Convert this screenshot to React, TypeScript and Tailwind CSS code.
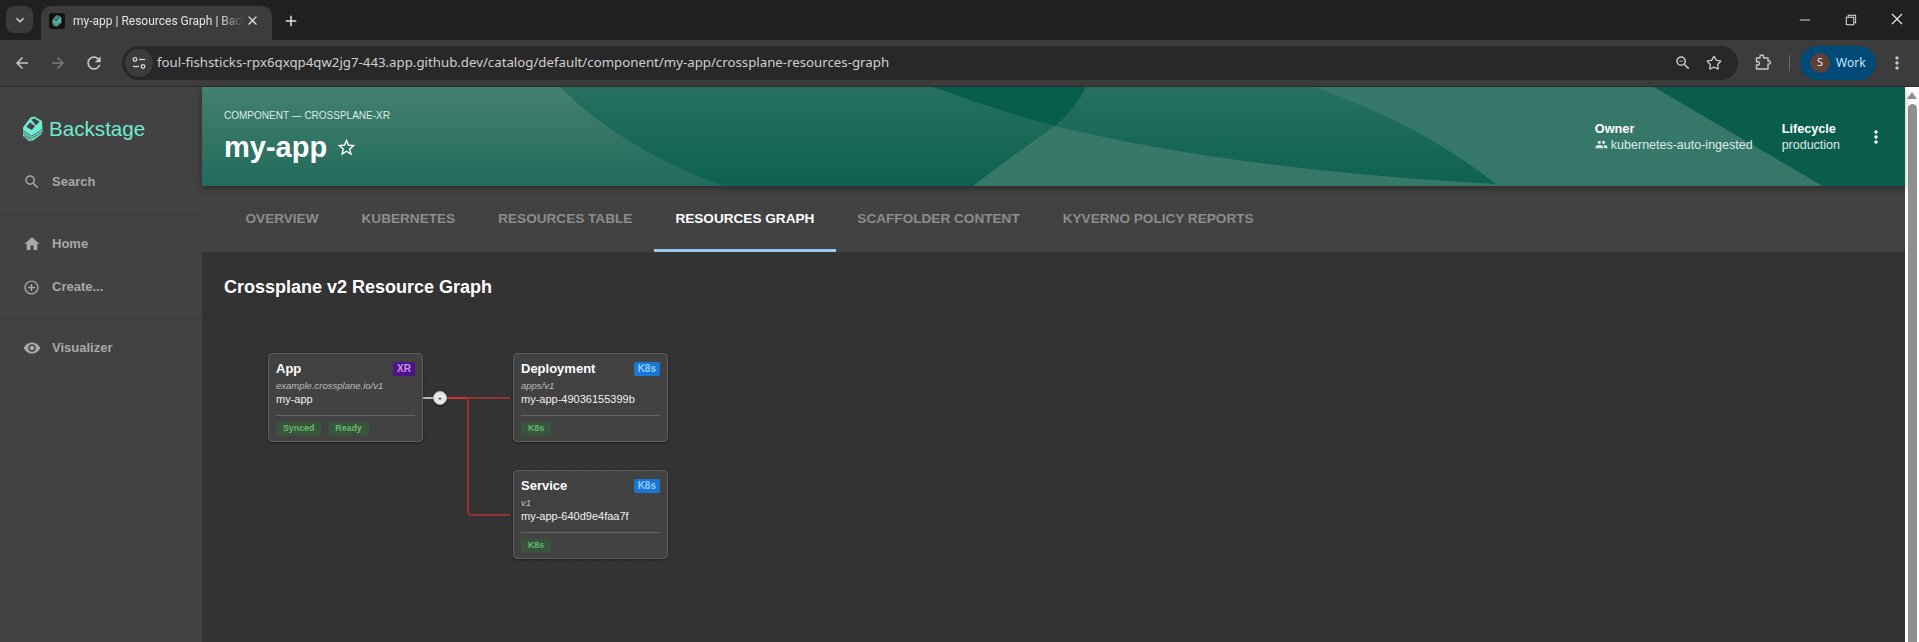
import React from "react";
import { MdArrowBack, MdArrowForward, MdRefresh, MdHome, MdSearch, MdAddCircleOutline, MdVisibility, MdPeople, MdMoreVert, MdStarBorder, MdKeyboardArrowDown, MdClose, MdAdd, MdZoomOut } from "react-icons/md";
import { VscChromeMinimize, VscChromeRestore, VscChromeClose } from "react-icons/vsc";
import { LuStar } from "react-icons/lu";

const arial = "[font-family:'Liberation_Sans',Arial,sans-serif]";

function Logo({ size = 26, color = "#6eebd0", dark = "#424242" }: { size?: number; color?: string; dark?: string }) {
  return (
    <svg width={size * 0.81} height={size} viewBox="0 0 21 26" className="shrink-0">
      <path d="M1 11.5 L8.5 1.5 L12.5 0.5 L20 5 L20.5 16 L19 18.5 L10 25 L7 25 L1 20 Z" fill={color} />
      <path d="M9.2 3.4 L12.4 2.4 L17.6 5.8 L14 9.2 Z" fill={dark} />
      <path d="M4.4 10.8 L8 6.6 L13 10 L9.8 14 Z" fill={dark} />
      <path d="M1 14.6 L9.5 20.2 L20 13.8 M1 17 L9.5 22.4 L20 16.2 M2 19.8 L9.5 24.4" fill="none" stroke={dark} strokeWidth="0.8" />
    </svg>
  );
}

function HeaderArt() {
  return (
    <svg className="absolute inset-0 h-full w-full" viewBox="0 0 1703 99" preserveAspectRatio="none">
      <defs>
        <linearGradient id="base" x1="0" y1="0" x2="0" y2="1">
          <stop offset="0" stopColor="#277060" />
          <stop offset="1" stopColor="#0e6250" />
        </linearGradient>
        <linearGradient id="left" x1="0" y1="0" x2="0" y2="1">
          <stop offset="0" stopColor="#44806f" />
          <stop offset="1" stopColor="#226b5b" />
        </linearGradient>
      </defs>
      <rect width="1703" height="99" fill="url(#base)" />
      <path d="M0 0 H358 Q420 62 521 99 H0 Z" fill="url(#left)" />
      <path d="M731 0 Q790 22 853 39 Q875 20 884 0 Z" fill="#075e4d" />
      <path d="M771 99 Q815 65 853 39 Q1040 85 1330 99 Z" fill="#387869" />
      <path d="M1112 0 H1452 L1621 99 H1296 Q1225 40 1112 0 Z" fill="#35786a" />
      <path d="M1452 0 H1703 V99 H1621 Z" fill="#0a5d4c" />
    </svg>
  );
}

function NavItem({ icon, label, className }: { icon: React.ReactNode; label: string; className: string }) {
  return (
    <div className={`flex items-center ${className}`}>
      <span className="flex w-[25px] justify-center text-[#a8a8a8]">{icon}</span>
      <span className="ml-[8px] text-[13px] font-bold text-[#a8a8a8]">{label}</span>
    </div>
  );
}

function Node({ title, badge, badgeClass, api, name, chips, className }: { title: string; badge: string; badgeClass: string; api: string; name: string; chips: string[]; className: string }) {
  return (
    <div className={`absolute flex h-[89px] w-[155px] flex-col rounded-[4px] border border-[#5c5c5c] bg-[#424242] px-[7px] pt-[7px] shadow-[0_1px_3px_rgba(0,0,0,0.4)] ${className}`}>
      <div className="flex h-[15px] items-center justify-between">
        <span className="text-[13px] font-bold text-white">{title}</span>
        <span className={`flex h-[14px] items-center rounded-[2px] px-[4px] text-[10px] font-bold ${badgeClass}`}>{badge}</span>
      </div>
      <div className="mt-[4px] h-[12px] text-[9.5px] italic leading-[12px] text-[#bdbdbd]">{api}</div>
      <div className="h-[14px] text-[11px] leading-[14px] text-[#f0f0f0]">{name}</div>
      <div className="mt-[9px] border-t border-[#666]" />
      <div className="mt-[6px] flex gap-[7px]">
        {chips.map((c) => (
          <span key={c} className="flex h-[14px] items-center rounded-[2px] bg-[#3a533c] px-[7px] text-[8.8px] font-bold text-[#66bb6a]">{c}</span>
        ))}
      </div>
    </div>
  );
}

export default function App() {
  const tabs = ["Overview", "Kubernetes", "Resources Table", "Resources Graph", "Scaffolder Content", "Kyverno Policy Reports"];
  return (
    <div className={`flex h-[642px] w-[1919px] flex-col overflow-hidden bg-[#333] ${arial}`}>
      {/* tab strip */}
      <div className="flex h-[40px] shrink-0 items-end bg-[#1f2120] [font-family:'Noto_Sans',sans-serif]">
        <div className="mb-[7px] ml-[6px] flex h-[27px] w-[27px] items-center justify-center rounded-[8px] bg-[#3a3a3a] text-[#d8d8d8]">
          <MdKeyboardArrowDown size={16} />
        </div>
        <div className="ml-[8px] flex h-[34px] w-[231px] items-center rounded-t-[10px] bg-[#3c3c3c] pb-[5px] pl-[8px] pr-[8px]">
          <span className="flex h-[16px] w-[16px] items-center justify-center rounded-[3px] bg-[#111]">
            <Logo size={12} color="#5fb5a5" dark="#2a5f57" />
          </span>
          <span className="ml-[8px] w-[172px] overflow-hidden whitespace-nowrap [font-family:Roboto,sans-serif] text-[12px] text-[#e3e3e3] [mask-image:linear-gradient(to_right,#000_85%,transparent)]">my-app | Resources Graph | Backstage</span>
          <MdClose size={15} className="text-[#e3e3e3]" />
        </div>
        <MdAdd size={18} className="mb-[10px] ml-[10px] text-[#e3e3e3]" />
        <div className="flex-1" />
        <div className="mb-[13px] flex items-center text-[#e3e3e3]">
          <VscChromeMinimize size={15} className="mr-[31px]" />
          <VscChromeRestore size={15} className="mr-[31px]" />
          <VscChromeClose size={16} className="mr-[14px]" />
        </div>
      </div>
      {/* toolbar */}
      <div className="flex h-[47px] shrink-0 items-center border-b border-[#2e2e2e] bg-[#3c3c3c] pb-[1px] [font-family:'Noto_Sans',sans-serif]">
        <MdArrowBack size={18} className="ml-[13px] text-[#c7c7c7]" />
        <MdArrowForward size={18} className="ml-[18px] text-[#7d7d7d]" />
        <MdRefresh size={20} className="ml-[17px] text-[#c7c7c7]" />
        <div className="ml-[18px] flex h-[34px] w-[1616px] items-center rounded-full bg-[#282828] pl-[3px] pr-[16px]">
          <span className="flex h-[28px] w-[28px] items-center justify-center rounded-full bg-[#3c3c3c]">
            <svg width="14" height="14" viewBox="0 0 14 14" fill="none" stroke="#d5d5d5" strokeWidth="1.3">
              <circle cx="3" cy="3.5" r="1.8" />
              <path d="M7 3.5 H13" />
              <path d="M1 10.5 H7" />
              <circle cx="11" cy="10.5" r="1.8" />
            </svg>
          </span>
          <span className="ml-[4px] whitespace-nowrap text-[13.25px] text-[#d0d0d0]">foul-fishsticks-rpx6qxqp4qw2jg7-443.app.github.dev/catalog/default/component/my-app/crossplane-resources-graph</span>
          <div className="flex-1" />
          <MdZoomOut size={18} className="text-[#c7c7c7]" />
          <LuStar size={16} className="ml-[14px] text-[#c7c7c7]" />
        </div>
        <svg width="17" height="17" viewBox="0 0 17 17" fill="none" stroke="#c7c7c7" strokeWidth="1.4" strokeLinejoin="round" className="ml-[17px]">
          <path d="M1.5 4 H5 V2.8 A1.8 1.8 0 0 1 8.6 2.8 V4 H13 V7 H14 A1.5 1.5 0 0 1 14 10 H13 V15 H1.5 V11 H2.8 A1.6 1.6 0 0 0 2.8 7.8 H1.5 Z" />
        </svg>
        <div className="ml-[17px] h-[16px] w-[1px] bg-[#6a6a6a]" />
        <div className="ml-[10px] flex h-[34px] w-[76px] items-center rounded-full bg-[#004a77] pl-[10px]">
          <span className="flex h-[20px] w-[20px] items-center justify-center rounded-full bg-[#5d4037] text-[11px] text-[#e8e8e8]">S</span>
          <span className="ml-[6px] text-[12px] text-[#c2e7ff]">Work</span>
        </div>
        <MdMoreVert size={20} className="ml-[11px] text-[#c7c7c7]" />
      </div>
      {/* page */}
      <div className="flex min-h-0 flex-1">
        <aside className="flex w-[202px] shrink-0 flex-col bg-[#424242]">
          <div className="flex items-center pl-[22px] pt-[29px]">
            <Logo size={26} />
            <span className="ml-[6px] text-[20.6px] leading-[26px] text-[#6eebd0]">Backstage</span>
          </div>
          <NavItem icon={<MdSearch size={18} />} label="Search" className="mt-[28px] h-[24px] pl-[19px]" />
          <div className="mt-[20px] border-t border-[#383838]" />
          <NavItem icon={<MdHome size={18} />} label="Home" className="mt-[17px] h-[24px] pl-[19px]" />
          <NavItem icon={<MdAddCircleOutline size={17} />} label="Create..." className="mt-[19px] h-[24px] pl-[19px]" />
          <div className="mt-[19px] border-t border-[#383838]" />
          <NavItem icon={<MdVisibility size={18} />} label="Visualizer" className="mt-[17px] h-[24px] pl-[19px]" />
        </aside>
        <main className="flex min-w-0 flex-1 flex-col">
          <header className="relative z-10 flex h-[99px] shrink-0 items-center pl-[22px] pr-[15px] shadow-[0_3px_6px_rgba(0,0,0,0.3)]">
            <HeaderArt />
            <div className="relative flex flex-col">
              <span className="text-[10px] leading-[14px] text-[#dfe9e6]">COMPONENT — CROSSPLANE-XR</span>
              <div className="mt-[6px] flex items-center">
                <span className="text-[29px] font-bold leading-[36px] text-white">my-app</span>
                <MdStarBorder size={21} className="ml-[9px] mt-[1px] text-white" />
              </div>
            </div>
            <div className="flex-1" />
            <div className="relative flex flex-col">
              <span className="text-[12.7px] font-bold leading-[16px] text-white">Owner</span>
              <span className="flex items-center text-[12.5px] leading-[16px] text-[#dfeae7]">
                <MdPeople size={13} className="mr-[3px] text-[#dfeae7]" />kubernetes-auto-ingested
              </span>
            </div>
            <div className="relative ml-[29px] flex flex-col">
              <span className="text-[12.7px] font-bold leading-[16px] text-white">Lifecycle</span>
              <span className="text-[12.5px] leading-[16px] text-[#dfeae7]">production</span>
            </div>
            <MdMoreVert size={20} className="relative ml-[26px] mr-[4px] text-white" />
          </header>
          <nav className="flex h-[66px] shrink-0 bg-[#424242] pl-[22px]">
            {tabs.map((t, i) => (
              <div key={t} className={`flex items-center border-b-[3px] px-[21.5px] pt-[3px] text-[13.6px] font-bold uppercase ${i === 3 ? "border-[#9cc9f0] text-white" : "border-transparent text-[#8c8c8c]"}`}>
                {t}
              </div>
            ))}
          </nav>
          <section className="flex min-h-0 flex-1 flex-col px-[22px]">
            <h2 className="flex h-[48px] shrink-0 items-start pt-[25px] text-[18px] font-bold leading-[20px] text-white">Crossplane v2 Resource Graph</h2>
            <div className="relative min-h-0 flex-1 bg-[radial-gradient(circle,#414141_0.8px,transparent_1px)] bg-[size:14.5px_14.5px] bg-[position:-4.75px_-1.25px]">
              <svg className="absolute left-0 top-0" width="300" height="240" fill="none">
                <path d="M199 98 H209" stroke="#b8b8b8" strokeWidth="2" />
                <path d="M223 98 H286" stroke="#953333" strokeWidth="2" />
                <path d="M244 98 V211 Q244 215 248 215 H286" stroke="#953333" strokeWidth="2" />
                <path d="M223 98 H243" stroke="#c93636" strokeWidth="2" />
              </svg>
              <div className="absolute left-[209px] top-[91px] flex h-[14px] w-[14px] items-center justify-center rounded-full border border-[#bbb] bg-[#e8e8e8] text-[10px] font-bold leading-none text-[#222] shadow-[0_1px_2px_rgba(0,0,0,0.5)]">-</div>
              <Node className="left-[44px] top-[53px]" title="App" badge="XR" badgeClass="bg-[#4a148c] text-[#ce93d8]" api="example.crossplane.io/v1" name="my-app" chips={["Synced", "Ready"]} />
              <Node className="left-[289px] top-[53px]" title="Deployment" badge="K8s" badgeClass="bg-[#1976d2] text-[#90caf9]" api="apps/v1" name="my-app-49036155399b" chips={["K8s"]} />
              <Node className="left-[289px] top-[170px]" title="Service" badge="K8s" badgeClass="bg-[#1976d2] text-[#90caf9]" api="v1" name="my-app-640d9e4faa7f" chips={["K8s"]} />
            </div>
          </section>
        </main>
        <div className="flex w-[14px] shrink-0 flex-col items-center bg-white pt-[5px]">
          <div className="h-0 w-0 border-x-[5px] border-b-[7px] border-x-transparent border-b-[#8f8f8f]" />
          <div className="mt-[5px] w-[9px] flex-1 rounded-t-full bg-[#8f8f8f]" />
        </div>
      </div>
    </div>
  );
}
